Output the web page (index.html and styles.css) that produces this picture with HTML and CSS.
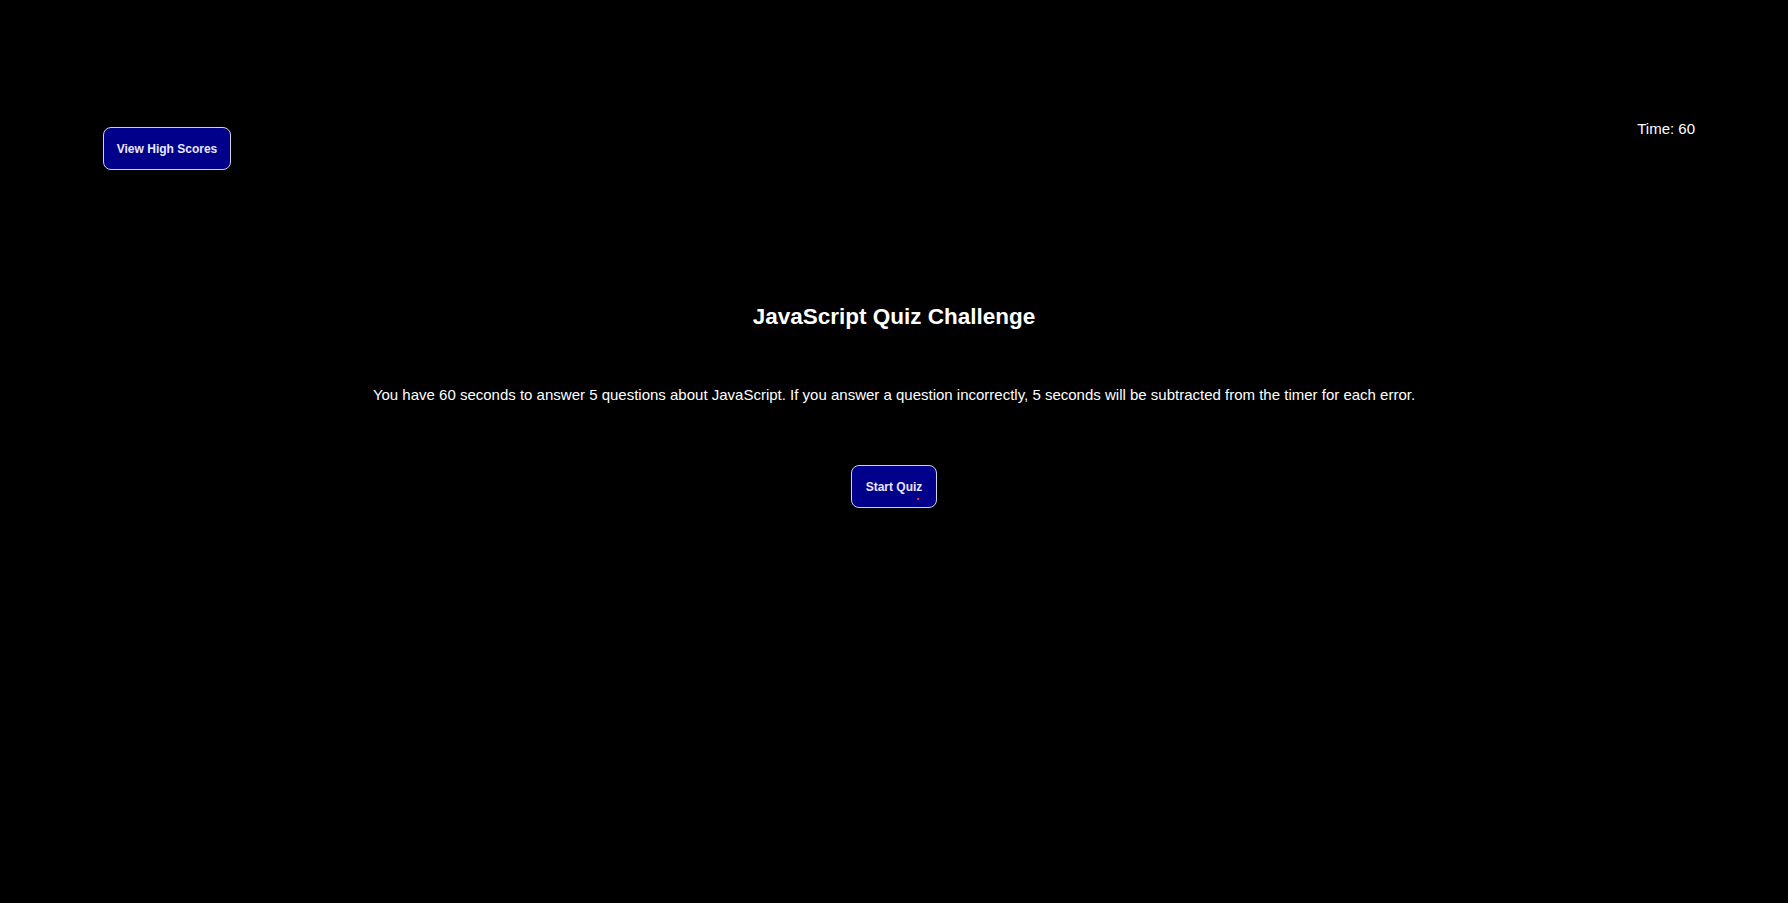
FILE: index.html
```html
<!DOCTYPE html>
<html lang="en">
<head>
<meta charset="utf-8">
<title>JavaScript Quiz Challenge</title>
<link rel="stylesheet" href="styles.css">
</head>
<body>
<header class="top-bar">
  <button class="btn btn-scores">View High Scores</button>
  <div class="timer">Time: 60</div>
</header>
<main class="intro">
  <h2 class="intro-title">JavaScript Quiz Challenge</h2>
  <p class="intro-text">You have 60 seconds to answer 5 questions about JavaScript. If you answer a question incorrectly, 5 seconds will be subtracted from the timer for each error.</p>
  <button class="btn btn-start">Start Quiz<span class="cursor-dot"></span></button>
</main>
</body>
</html>
```
FILE: styles.css
```css
html, body {
  margin: 0;
  padding: 0;
  background: #000;
  color: #fff;
  font-family: "Liberation Sans", Arial, sans-serif;
  height: 100%;
}

.top-bar {
  display: flex;
  justify-content: space-between;
  align-items: flex-start;
  padding: 120px 93px 0 103px;
}

.btn {
  box-sizing: border-box;
  background: #00008b;
  color: #e8e8ff;
  border: 1px solid #d0d0e0;
  border-radius: 8px;
  font-family: "Liberation Sans", Arial, sans-serif;
  font-weight: bold;
  font-size: 12px;
  height: 43px;
  padding: 0;
  white-space: nowrap;
  cursor: pointer;
}

.btn-scores {
  margin-top: 7px;
  width: 128px;
}

.timer {
  font-size: 15px;
  line-height: 18px;
}

.intro {
  display: flex;
  flex-direction: column;
  align-items: center;
  text-align: center;
}

.intro-title {
  margin: 134px 0 0;
  font-size: 22.5px;
  line-height: 26px;
  font-weight: bold;
}

.intro-text {
  margin: 56px 0 0;
  font-size: 15px;
  line-height: 18px;
}

.btn-start {
  position: relative;
  margin-top: 61px;
  width: 86px;
}

.cursor-dot {
  position: absolute;
  left: 65px;
  top: 32px;
  width: 2px;
  height: 2px;
  background: #ff2030;
}
```
